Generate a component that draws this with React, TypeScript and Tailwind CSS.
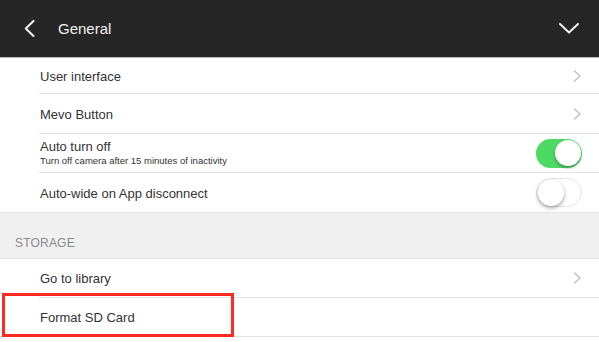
import React from "react";

const Chevron = () => (
  <svg width="9" height="12" viewBox="0 0 9 12" fill="none">
    <path d="M1.5 1L7 6L1.5 11" stroke="#c4c4c8" strokeWidth="1.6" strokeLinecap="round" strokeLinejoin="round" />
  </svg>
);

const Toggle = ({ on }: { on: boolean }) => (
  <div
    className={
      on
        ? "relative w-[46px] h-[29px] rounded-full bg-[#4cd964]"
        : "relative w-[46px] h-[29px] rounded-full bg-white border border-[#e3e3e3]"
    }
  >
    <div
      className={
        on
          ? "absolute top-[1.5px] right-[1.5px] w-[26px] h-[26px] rounded-full bg-white shadow-[0_2px_3px_rgba(0,0,0,0.3)]"
          : "absolute top-[0.5px] left-[0.5px] w-[26px] h-[26px] rounded-full bg-white shadow-[0_2px_4px_rgba(0,0,0,0.35)]"
      }
    />
  </div>
);

const Row = ({
  h,
  children,
  right,
  full,
}: {
  h: string;
  children: React.ReactNode;
  right?: React.ReactNode;
  full?: boolean;
}) => (
  <div className={full ? "border-b border-[#e4e4e4]" : ""}>
    <div
      className={
        (full ? "" : "border-b border-[#e4e4e4] ") +
        "ml-[39px] pl-[1px] pr-[17px] flex items-center justify-between " +
        h
      }
    >
      <div>{children}</div>
      {right}
    </div>
  </div>
);

export default function App() {
  return (
    <div
      className="relative w-[599px] h-[342px] bg-white overflow-hidden text-[#333]"
      style={{ fontFamily: '"Liberation Sans", Arial, sans-serif' }}
    >
      <div className="h-[57px] bg-[#262626] flex items-center justify-between pl-[24px] pr-[20px]">
        <div className="flex items-center">
          <svg width="11" height="17" viewBox="0 0 11 17" fill="none">
            <path d="M9.5 1L1.8 8.5L9.5 16" stroke="#f2f2f2" strokeWidth="2" strokeLinecap="round" strokeLinejoin="round" />
          </svg>
          <span className="ml-[23px] text-[15px] text-[#f2f2f2] mt-[1px]">General</span>
        </div>
        <svg width="20" height="11" viewBox="0 0 20 11" fill="none">
          <path d="M1 1L10 9.5L19 1" stroke="#f2f2f2" strokeWidth="2" strokeLinecap="round" strokeLinejoin="round" />
        </svg>
      </div>
      <div className="h-[1px] bg-[#bdbdbd]" />

      <Row h="h-[36px]" right={<Chevron />}>
        <span className="text-[13px]">User interface</span>
      </Row>
      <Row h="h-[40px]" right={<Chevron />}>
        <span className="text-[13px]">Mevo Button</span>
      </Row>
      <Row h="h-[39px]" right={<Toggle on />}>
        <div className="leading-none">
          <div className="text-[13px]">Auto turn off</div>
          <div className="text-[9.5px] mt-[3px]">Turn off camera after 15 minutes of inactivity</div>
        </div>
      </Row>
      <Row h="h-[39px]" right={<Toggle on={false} />} full>
        <span className="text-[13px]">Auto-wide on App disconnect</span>
      </Row>

      <div className="h-[46px] bg-[#f0f0f0] border-b border-[#e4e4e4] flex items-end pl-[15px] pb-[6px]">
        <span className="text-[12px] text-[#8a8a8a] tracking-[0.2px]">STORAGE</span>
      </div>

      <Row h="h-[39px]" right={<Chevron />}>
        <span className="text-[13px]">Go to library</span>
      </Row>
      <Row h="h-[38px]" full>
        <span className="text-[13px]">Format SD Card</span>
      </Row>

      <div className="absolute left-[2px] top-[293px] w-[232px] h-[44px] border-[3px] border-[#ff2a22]" />
    </div>
  );
}
